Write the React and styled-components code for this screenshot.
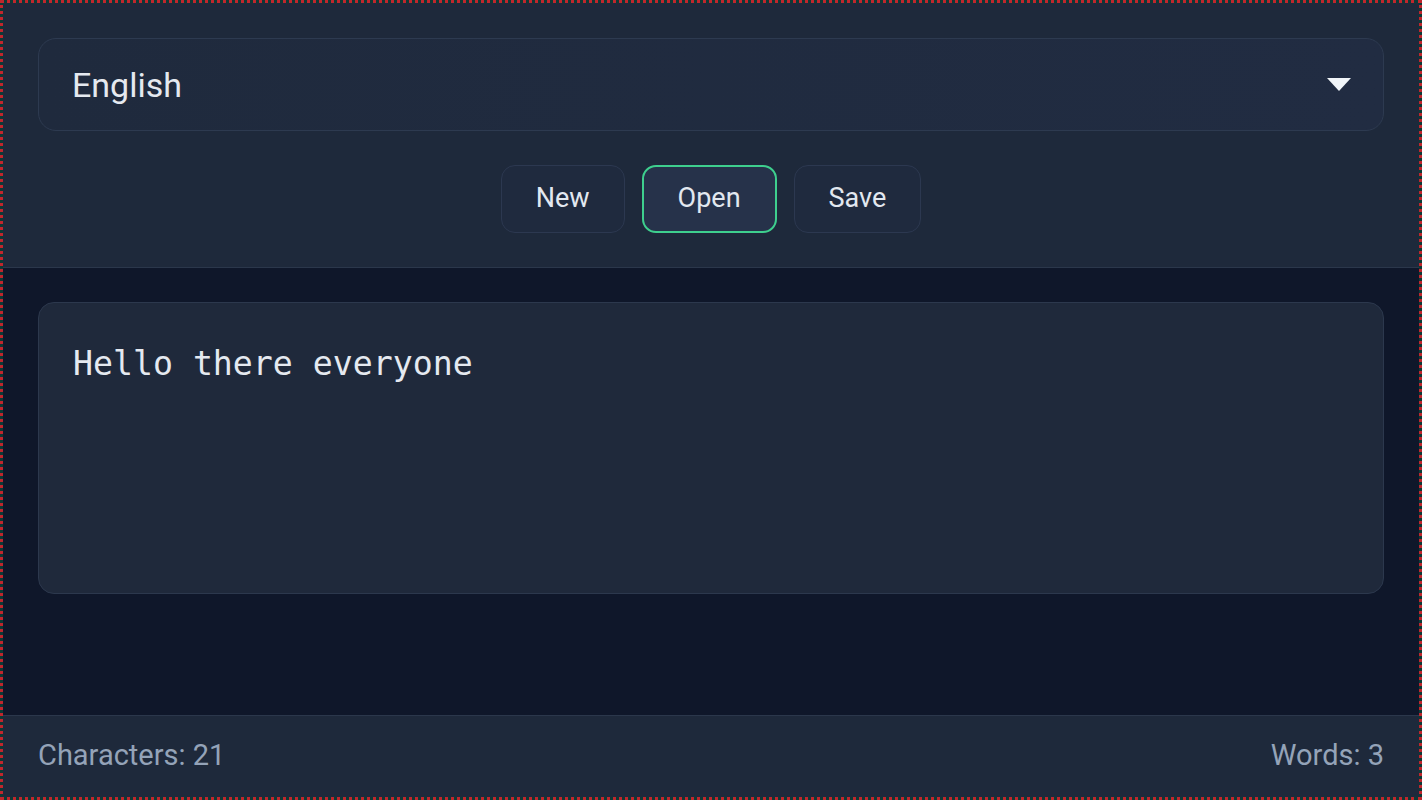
import React from 'react';
import styled, { createGlobalStyle, css } from 'styled-components';

const GlobalStyle = createGlobalStyle`
  * {
    margin: 0;
    padding: 0;
    box-sizing: border-box;
  }

  html, body, #root {
    height: 100%;
  }

  body {
    font-family: Roboto, 'Liberation Sans', sans-serif;
    background: #0f172a;
    color: #e2e8f0;
    -webkit-font-smoothing: antialiased;
  }
`;

const Frame = styled.div`
  height: 800px;
  border: 3px dotted #c0262d;
  background: #0b3a36;
  display: flex;
  flex-direction: column;
  overflow: hidden;
`;

const Header = styled.header`
  background: #1e293b;
  border-bottom: 1px solid #2b374b;
  padding: 35px 35px 34px;
  display: flex;
  flex-direction: column;
  gap: 34px;
`;

const SelectBox = styled.div`
  height: 93px;
  border: 1px solid #2d3a50;
  border-radius: 18px;
  background: linear-gradient(90deg, #1f2a3d 0%, #212c42 100%);
  display: flex;
  align-items: center;
  justify-content: space-between;
  padding: 0 34px 0 33px;
  font-size: 34px;
  color: #e5e9f0;
`;

const Caret = styled.span`
  width: 0;
  height: 0;
  border-left: 12px solid transparent;
  border-right: 12px solid transparent;
  border-top: 13px solid #f1f5f9;
  margin-right: -2px;
`;

const Toolbar = styled.div`
  display: flex;
  justify-content: center;
  gap: 17px;
`;

const Button = styled.button`
  height: 68px;
  padding: 0 34px;
  border-radius: 14px;
  font-family: Roboto, 'Liberation Sans', sans-serif;
  font-size: 27px;
  line-height: 1;
  padding-bottom: 2px;
  color: #e2e8f0;
  background: #1f2a3e;
  border: 1px solid #2c3850;
  cursor: pointer;

  ${p => p.$active && css`
    background: #26324a;
    border: 2px solid #3ecf8e;
  `}
`;

const Main = styled.main`
  flex: 1;
  background: #0f172a;
  padding: 34px 35px;
`;

const Editor = styled.div`
  height: 292px;
  background: #1f293b;
  border: 1px solid #2c384d;
  border-radius: 16px;
  padding: 41px 34px;
  font-family: 'DejaVu Sans Mono', 'Liberation Mono', monospace;
  font-size: 33.2px;
  color: #e5e9f0;
`;

const Footer = styled.footer`
  height: 82px;
  background: #1e293b;
  border-top: 1px solid #2b374b;
  padding: 0 35px 4px;
  display: flex;
  align-items: center;
  justify-content: space-between;
  font-size: 29px;
  color: #94a3b8;
`;

export default function App() {
  const text = 'Hello there everyone';
  const words = text.trim().split(/\s+/).length;

  return (
    <>
      <GlobalStyle />
      <Frame>
        <Header>
          <SelectBox>
            <span>English</span>
            <Caret />
          </SelectBox>
          <Toolbar>
            <Button>New</Button>
            <Button $active>Open</Button>
            <Button>Save</Button>
          </Toolbar>
        </Header>
        <Main>
          <Editor>{text}</Editor>
        </Main>
        <Footer>
          <span>Characters: {text.length + 1}</span>
          <span>Words: {words}</span>
        </Footer>
      </Frame>
    </>
  );
}
